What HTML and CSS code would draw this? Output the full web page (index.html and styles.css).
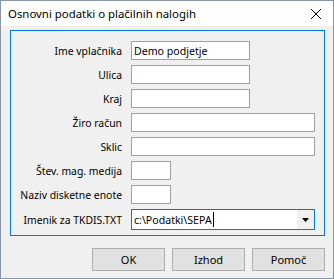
FILE: index.html
```html
<!DOCTYPE html>
<html>
<head>
<meta charset="utf-8">
<link rel="stylesheet" href="styles.css">
</head>
<body>
<div class="window">
  <div class="titlebar">
    <span class="title">Osnovni podatki o plačilnih nalogih</span>
    <svg class="close" width="12" height="12" viewBox="0 0 12 12"><path d="M1 1 L11 11 M11 1 L1 11" stroke="#000" stroke-width="1" fill="none"/></svg>
  </div>
  <div class="content">
    <div class="panel">
      <label class="lbl">Ime vplačnika</label>
      <div class="field w-mid"><span class="val">Demo podjetje</span></div>
      <label class="lbl">Ulica</label>
      <div class="field w-mid"></div>
      <label class="lbl">Kraj</label>
      <div class="field w-mid"></div>
      <label class="lbl">Žiro račun</label>
      <div class="field w-full"></div>
      <label class="lbl">Sklic</label>
      <div class="field w-full"></div>
      <label class="lbl">Štev. mag. medija</label>
      <div class="field w-small"></div>
      <label class="lbl">Naziv disketne enote</label>
      <div class="field w-small"></div>
      <label class="lbl">Imenik za TKDIS.TXT</label>
      <div class="combo">
        <span class="val">c:\Podatki\SEPA</span><span class="caret"></span>
        <span class="drop"><svg width="8" height="4" viewBox="0 0 8 4"><path d="M0 0 H7 L3.5 4 Z" fill="#000"/></svg></span>
      </div>
    </div>
    <div class="buttons">
      <button class="btn">OK</button>
      <button class="btn">Izhod</button>
      <button class="btn">Pomoč</button>
    </div>
  </div>
</div>
</body>
</html>
```
FILE: styles.css
```css
html, body { margin: 0; padding: 0; }
body {
  font-family: "Noto Sans", "DejaVu Sans", sans-serif;
  font-size: 10.6px;
  color: #000;
  background: #f0f0f0;
}
.window {
  width: 334px;
  height: 279px;
  box-sizing: border-box;
  border: 1px solid #8a97a6;
  background: #f0f0f0;
  display: flex;
  flex-direction: column;
}
.titlebar {
  height: 25px;
  background: #fff;
  display: flex;
  align-items: center;
  justify-content: space-between;
  padding: 0 11px 0 7px;
  flex-shrink: 0;
}
.title { font-size: 11.4px; line-height: 16px; }
.close { display: block; }
.content {
  padding: 4px 8px 0 9px;
  display: flex;
  flex-direction: column;
}
.panel {
  border: 1px solid #0078d7;
  height: 206px;
  box-sizing: border-box;
  padding: 10px 9px 5px 0;
  display: grid;
  grid-template-columns: 111px 1fr;
  column-gap: 9px;
  row-gap: 5px;
  align-content: start;
  align-items: center;
}
.lbl {
  text-align: right;
  white-space: nowrap;
  line-height: 16px;
  font-size: 10.4px;
}
.field {
  height: 19px;
  box-sizing: border-box;
  border: 1px solid #a0a0a0;
  background: #fff;
  display: flex;
  align-items: center;
  padding-left: 2px;
}
.val { line-height: 16px; white-space: nowrap; }
.w-mid { width: 119px; }
.w-full { width: 184px; }
.w-small { width: 40px; }
.combo {
  width: 184px;
  height: 21px;
  box-sizing: border-box;
  border: 1px solid #0078d7;
  background: #fff;
  display: flex;
  align-items: center;
  padding-left: 2px;
}
.caret {
  width: 1px;
  height: 15px;
  background: #000;
  margin-left: 1px;
}
.drop {
  margin-left: auto;
  width: 17px;
  height: 19px;
  background: #f0f0f0;
  display: flex;
  align-items: center;
  justify-content: center;
}
.drop svg { display: block; }
.buttons {
  display: flex;
  justify-content: flex-end;
  gap: 7px;
  margin-top: 12px;
}
.btn {
  width: 73px;
  height: 23px;
  box-sizing: border-box;
  border: 1px solid #adadad;
  background: #e1e1e1;
  font-family: inherit;
  font-size: 11px;
  color: #000;
  padding: 0;
}
```
